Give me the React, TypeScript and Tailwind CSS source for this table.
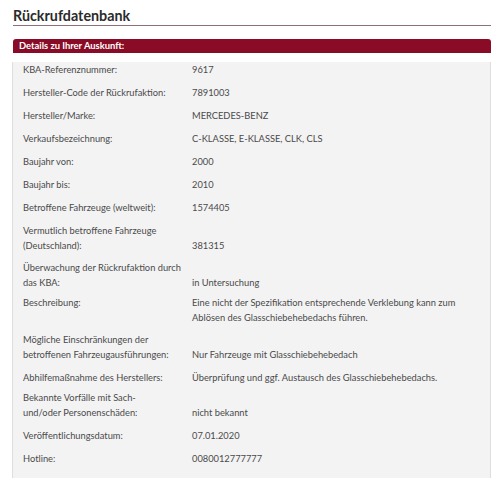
type Row = {
  label: React.ReactNode
  value: React.ReactNode
  top?: boolean
  gap: string
}

const rows: Row[] = [
  { label: 'KBA-Referenznummer:', value: '9617', gap: 'mt-[9px]' },
  { label: 'Hersteller-Code der Rückrufaktion:', value: '7891003', gap: 'mt-[8px]' },
  { label: 'Hersteller/Marke:', value: 'MERCEDES-BENZ', gap: 'mt-[8px]' },
  { label: 'Verkaufsbezeichnung:', value: 'C-KLASSE, E-KLASSE, CLK, CLS', gap: 'mt-[8px]' },
  { label: 'Baujahr von:', value: '2000', gap: 'mt-[8px]' },
  { label: 'Baujahr bis:', value: '2010', gap: 'mt-[8px]' },
  { label: 'Betroffene Fahrzeuge (weltweit):', value: '1574405', gap: 'mt-[8px]' },
  {
    label: (
      <>
        Vermutlich betroffene Fahrzeuge
        <br />
        (Deutschland):
      </>
    ),
    value: '381315',
    gap: 'mt-[8px]',
  },
  {
    label: (
      <>
        Überwachung der Rückrufaktion durch
        <br />
        das KBA:
      </>
    ),
    value: 'in Untersuchung',
    gap: 'mt-[7px]',
  },
  {
    label: 'Beschreibung:',
    value: (
      <>
        Eine nicht der Spezifikation entsprechende Verklebung kann zum
        <br />
        Ablösen des Glasschiebehebedachs führen.
      </>
    ),
    top: true,
    gap: 'mt-[5px]',
  },
  {
    label: (
      <>
        Mögliche Einschränkungen der
        <br />
        betroffenen Fahrzeugausführungen:
      </>
    ),
    value: 'Nur Fahrzeuge mit Glasschiebehebedach',
    gap: 'mt-[7px]',
  },
  {
    label: 'Abhilfemaßnahme des Herstellers:',
    value: 'Überprüfung und ggf. Austausch des Glasschiebehebedachs.',
    gap: 'mt-[8px]',
  },
  {
    label: (
      <>
        Bekannte Vorfälle mit Sach-
        <br />
        und/oder Personenschäden:
      </>
    ),
    value: 'nicht bekannt',
    gap: 'mt-[5px]',
  },
  { label: 'Veröffentlichungsdatum:', value: '07.01.2020', gap: 'mt-[8px]' },
  { label: 'Hotline:', value: '0080012777777', gap: 'mt-[8px]' },
]

export default function App() {
  return (
    <div className="bg-white pl-[13px] pr-[9px] font-['Lato',sans-serif]">
      <h1 className="pt-[7px] text-[14.3px] font-bold leading-[17px] text-[#2b2b2b]">Rückrufdatenbank</h1>
      <div className="mt-[1px] h-px bg-[#8d6f77]" />

      <div className="mt-[13px]">
        <div className="h-[14px] rounded-t-[3px] bg-[#8a0b26] pl-[6px] text-[9.4px] font-bold leading-[14px] text-white">
          Details zu Ihrer Auskunft:
        </div>
        <div className="-ml-px min-h-[425px] border-x border-[#dedede] bg-[#f3f3f3] pl-[10px] text-[9.3px] leading-[15px] text-[#4a4a4a]">
          {rows.map((r, i) => (
            <div key={i} className={`grid grid-cols-[169px_1fr] ${r.top ? 'items-start' : 'items-end'} ${r.gap}`}>
              <div>{r.label}</div>
              <div>{r.value}</div>
            </div>
          ))}
        </div>
      </div>
    </div>
  )
}
